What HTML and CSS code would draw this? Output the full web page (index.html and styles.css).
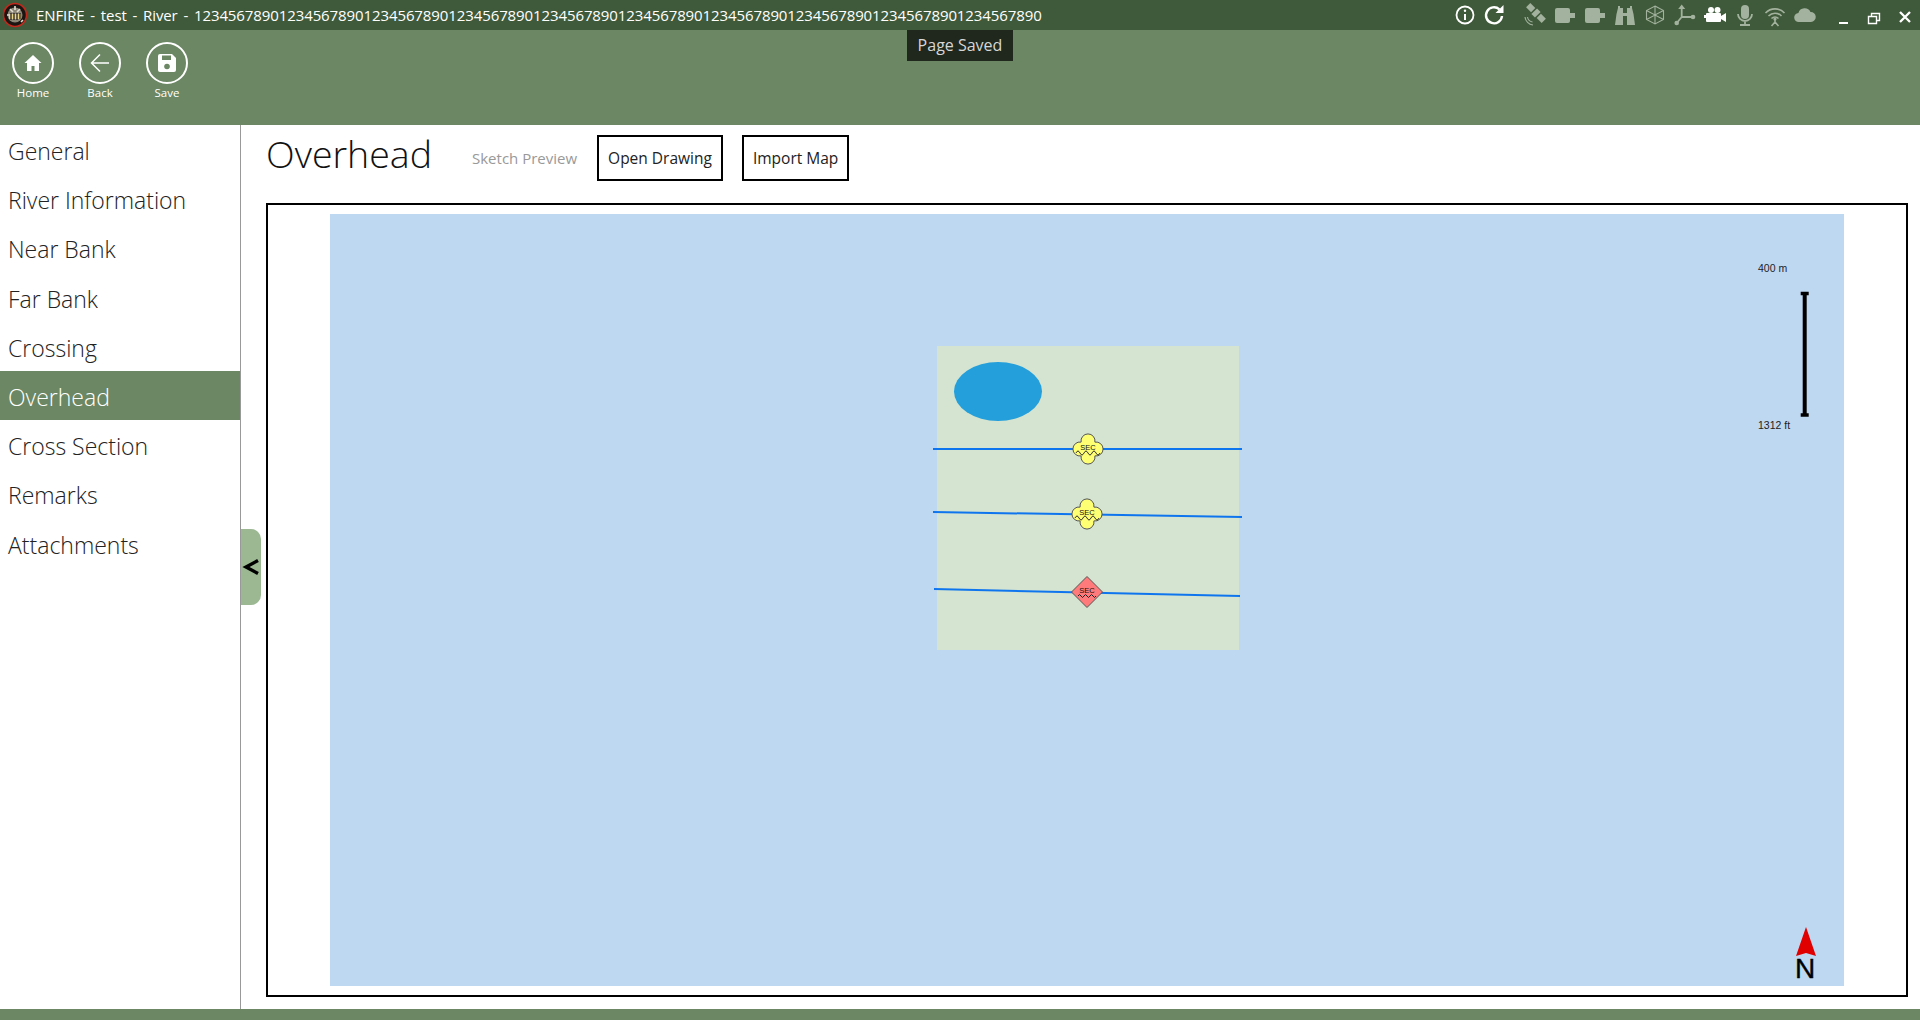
FILE: index.html
```html
<!DOCTYPE html>
<html lang="en">

<head>
    <meta charset="UTF-8" />
    <title>ENFIRE</title>
    <link rel="stylesheet" href="styles.css">
</head>

<body>
    <div class="titlebar">
        <svg class="logo" width="26" height="26" viewBox="0 0 26 26">
            <circle cx="13" cy="13" r="11.500" fill="#1c1512" stroke="#c4281c" stroke-width="1.500" />
            <circle cx="13" cy="13" r="7.500" fill="#8d8778" />
            <path d="M7 12h12v5H7z" fill="#e6d68e" />
            <path d="M9 11v7M12 11v7M15 11v7M18 11v6" stroke="#1c1512" stroke-width="1.200" />
            <path d="M8 7l3 3M18 7l-3 3M13 4v4M5 13h2M19 20l2-2" stroke="#e0dccf" stroke-width="1.600" />
        </svg>
        <span class="app-title">ENFIRE - test - River - 1234567890123456789012345678901234567890123456789012345678901234567890123456789012345678901234567890</span>

        <div class="status-icons">
            <svg class="ticon" viewBox="0 0 24 24"><circle cx="12" cy="12" r="8.500" fill="none" stroke="#fff" stroke-width="1.800" /><path d="M12 11v6" stroke="#fff" stroke-width="2" /><circle cx="12" cy="7.800" r="1.200" fill="#fff" /></svg>
            <svg class="ticon" viewBox="0 0 24 24"><path d="M19 13a8 8 0 1 1-2.600-6.600" fill="none" stroke="#fff" stroke-width="2.400" /><path d="M20.500 2v8h-8z" fill="#fff" /></svg>
            <svg class="ticon gap-left dim" viewBox="0 0 24 24"><g transform="rotate(45 13 10)"><rect x="2" y="7" width="7" height="6" /><rect x="10.500" y="6" width="5" height="8" /><rect x="17" y="7" width="7" height="6" /></g><path d="M2 14a9 9 0 0 0 8 8M4.500 14a6 6 0 0 0 5 5" fill="none" stroke="#a3b29e" stroke-width="1.100" /></svg>
            <svg class="ticon dim" viewBox="0 0 24 24"><rect x="2" y="5" width="15" height="15" rx="2" /><rect x="16" y="10" width="6" height="5" /></svg>
            <svg class="ticon dim" viewBox="0 0 24 24"><rect x="2" y="5" width="15" height="15" rx="2" /><rect x="16" y="10" width="6" height="5" /></svg>
            <svg class="ticon dim" viewBox="0 0 24 24"><path d="M5 3h2v2h3v5h4V5h3V3h2v2l1.500 6L22 22h-8V13h-4v9H2l1.500-11L5 5z" /></svg>
            <svg class="ticon" viewBox="0 0 24 24"><path d="M12 3l8.500 4.500v9L12 21l-8.500-4.500v-9zM3.500 7.500L12 12l8.500-4.500M12 12v9M12 3v9M3.500 16.500L12 12l8.500 4.500" fill="none" stroke="#a3b29e" stroke-width="1.100" /></svg>
            <svg class="ticon dim" viewBox="0 0 24 24"><path d="M8.700 3v11H20M8.700 14L3.700 20" fill="none" stroke="#a3b29e" stroke-width="1.800" /><path d="M8.700 1.500l-3.500 4.500h7z" /><circle cx="20" cy="14" r="2.300" /><circle cx="3.700" cy="20" r="2.300" /></svg>
            <svg class="ticon" viewBox="0 0 24 24"><circle cx="8" cy="7" r="3" fill="#fff" /><circle cx="14.500" cy="7" r="3" fill="#fff" /><rect x="3" y="10" width="15" height="9" rx="1" fill="#fff" /><path d="M18 13l5-3v9l-5-3zM1 12h2v3H1z" fill="#fff" /></svg>
            <svg class="ticon dim" viewBox="0 0 24 24"><rect x="8" y="2" width="8" height="14" rx="4" /><path d="M5 11a7 7 0 0 0 14 0M12 18v3" fill="none" stroke="#a3b29e" stroke-width="1.800" /><rect x="7" y="21" width="10" height="2" /></svg>
            <svg class="ticon" viewBox="0 0 24 24"><path d="M2.500 10a13 13 0 0 1 19 0M5.500 13a9 9 0 0 1 13 0M8.500 15.500a5 5 0 0 1 7 0M12 16v4M12 19l-3.500 4M12 19l3.500 4" fill="none" stroke="#a3b29e" stroke-width="1.600" /><circle cx="12" cy="16" r="1.600" fill="#a3b29e" /></svg>
            <svg class="ticon dim" viewBox="0 0 24 24"><path d="M6 19a4.500 4.500 0 0 1-.6-9A6.500 6.500 0 0 1 17.500 9a5 5 0 0 1 .5 10z" /></svg>
        </div>

        <div class="window-buttons">
            <svg width="14" height="24" viewBox="0 0 14 24"><rect x="2" y="19" width="9" height="2" fill="#fff" /></svg>
            <svg width="14" height="24" viewBox="0 0 14 24"><path d="M1.500 13.500h8v7h-8zM4.500 13v-2.500h8v7H10" fill="none" stroke="#fff" stroke-width="1.400" /></svg>
            <svg class="close-icon" width="14" height="24" viewBox="0 0 14 24"><path d="M2 9l10 10M12 9L2 19" stroke="#fff" stroke-width="2.300" /></svg>
        </div>
    </div>

    <div class="toolbar">
        <a class="tool">
            <span class="tool-circle">
                <svg width="22" height="22" viewBox="0 0 22 22"><path d="M11 3L2.500 11H5v8h4.500v-5h3v5H17v-8h2.500z" fill="#fff" /></svg>
            </span>
            Home
        </a>
        <a class="tool">
            <span class="tool-circle">
                <svg width="26" height="26" viewBox="0 0 26 26"><path d="M13 4.500L4.500 13l8.500 8.500M5 13h17" fill="none" stroke="#fff" stroke-width="1.500" /></svg>
            </span>
            Back
        </a>
        <a class="tool">
            <span class="tool-circle">
                <svg width="22" height="22" viewBox="0 0 22 22"><path d="M2 4a2 2 0 0 1 2-2h12l4 4v12a2 2 0 0 1-2 2H4a2 2 0 0 1-2-2z" fill="#fff" /><rect x="6" y="3.500" width="9" height="4.500" fill="#6b8763" /><circle cx="11" cy="14.500" r="2.800" fill="#6b8763" /></svg>
            </span>
            Save
        </a>
    </div>

    <div class="tooltip">Page Saved</div>

    <div class="main">
        <nav class="sidebar">
            <a class="nav-item">General</a>
            <a class="nav-item">River Information</a>
            <a class="nav-item">Near Bank</a>
            <a class="nav-item">Far Bank</a>
            <a class="nav-item">Crossing</a>
            <a class="nav-item active">Overhead</a>
            <a class="nav-item">Cross Section</a>
            <a class="nav-item">Remarks</a>
            <a class="nav-item">Attachments</a>
        </nav>

        <div class="collapse-handle">
            <svg width="18" height="18" viewBox="0 0 18 18"><path d="M16 2.500L4 9l12 6.500" fill="none" stroke="#000" stroke-width="3.400" /></svg>
        </div>

        <section class="content">
            <div class="content-head">
                <h1>Overhead</h1>
                <span class="preview-label">Sketch Preview</span>
                <button class="btn">Open Drawing</button>
                <button class="btn">Import Map</button>
            </div>

            <div class="sketch-frame">
                <svg class="sketch" width="1514" height="772" viewBox="330 214 1514 772">
                    <rect x="937" y="346" width="302" height="304" fill="#d4e4d0" />
                    <ellipse cx="998" cy="391.500" rx="44" ry="29.500" fill="#259fdb" />

                    <path d="M933 449H1242M933 512L1242 517M934 589L1240 596" stroke="#0f75ee" stroke-width="2" fill="none" />

                    <g transform="translate(1088 449)">
                        <path d="M-6.900-6.900A7 7 0 1 1 6.900-6.900 7 7 0 1 1 6.900 6.900 7 7 0 1 1-6.900 6.900 7 7 0 1 1-6.900-6.900Z" fill="#ffff73" stroke="#555" />
                        <text y="0.500" class="sec">SEC</text>
                        <path d="M-12 4q2-4 4 0t4 0 4 0 4 0 4 0 4 0" fill="none" stroke="#333" stroke-width="1" />
                    </g>
                    <g transform="translate(1087 514)">
                        <path d="M-6.900-6.900A7 7 0 1 1 6.900-6.900 7 7 0 1 1 6.900 6.900 7 7 0 1 1-6.900 6.900 7 7 0 1 1-6.900-6.900Z" fill="#ffff73" stroke="#555" />
                        <text y="0.500" class="sec">SEC</text>
                        <path d="M-12 4q2-4 4 0t4 0 4 0 4 0 4 0 4 0" fill="none" stroke="#333" stroke-width="1" />
                    </g>
                    <g transform="translate(1087 592)">
                        <path d="M0-15.500L15.500 0 0 15.500-15.500 0Z" fill="#ff7b7b" stroke="#555" />
                        <text y="1" class="sec">SEC</text>
                        <path d="M-9 4q1.500-3 3 0t3 0 3 0 3 0 3 0 3 0" fill="none" stroke="#222" stroke-width="1" />
                    </g>

                    <text x="1758" y="272" class="scale-text">400 m</text>
                    <text x="1758" y="429" class="scale-text">1312 ft</text>
                    <path d="M1804.700 293V416" stroke="#000" stroke-width="4" />
                    <path d="M1800.700 293.500H1808.700M1800.700 415H1808.700" stroke="#000" stroke-width="3.500" />

                    <path d="M1806 927L1816 956 1806 953 1796 956Z" fill="#e00000" />
                    <text x="1805" y="978" class="north">N</text>
                </svg>
            </div>
        </section>
    </div>

    <div class="statusbar"></div>
</body>

</html>
```

FILE: styles.css
```css
* {
    box-sizing: border-box;
}

html,
body {
    height: 100%;
}

body {
    margin: 0;
    display: flex;
    flex-direction: column;
    overflow: hidden;
    font-family: "Open Sans", "Liberation Sans", sans-serif;
    background-color: #fff;
    color: #222;
}

.titlebar {
    height: 30px;
    display: flex;
    align-items: center;
    padding-left: 2px;
    background-color: #3f5a3a;
    color: #fff;
}

.logo {
    flex: none;
}

.app-title {
    margin-left: 8px;
    font-size: 15px;
    letter-spacing: -0.1px;
    word-spacing: 2px;
    white-space: nowrap;
}

.status-icons {
    margin-left: auto;
    display: flex;
    gap: 6px;
}

.ticon {
    width: 24px;
    height: 24px;
    display: block;
}

.ticon.dim {
    fill: #a3b29e;
}

.gap-left {
    margin-left: 10px;
}

.window-buttons {
    display: flex;
    gap: 16px;
    margin-left: 20px;
    margin-right: 8px;
}

.close-icon {
    margin-left: 1px;
}

.toolbar {
    height: 95px;
    display: flex;
    gap: 23px;
    padding: 12px 0 0 11px;
    background-color: #6b8763;
}

.tool {
    width: 44px;
    display: flex;
    flex-direction: column;
    align-items: center;
    gap: 1px;
    color: #fff;
    font-size: 11.5px;
}

.tool-circle {
    width: 42px;
    height: 42px;
    display: flex;
    align-items: center;
    justify-content: center;
    border: 2.5px solid #fff;
    border-radius: 50%;
}

.tooltip {
    position: absolute;
    top: 30px;
    left: 907px;
    width: 106px;
    height: 31px;
    display: flex;
    align-items: center;
    justify-content: center;
    padding-bottom: 2px;
    background-color: #20281e;
    color: #d6d6d6;
    font-size: 16px;
}

.main {
    flex: 1;
    display: flex;
    position: relative;
    min-height: 0;
}

.sidebar {
    width: 241px;
    flex: none;
    border-right: 1px solid #999;
}

.nav-item {
    height: 49.2px;
    display: flex;
    align-items: center;
    padding: 3px 0 0 8px;
    font-size: 23px;
    font-weight: 300;
    color: #222;
}

.nav-item.active {
    background-color: #6b8763;
    color: #fff;
}

.collapse-handle {
    position: absolute;
    top: 404px;
    left: 241px;
    width: 20px;
    height: 76px;
    display: flex;
    align-items: center;
    justify-content: center;
    background-color: #9bb892;
    border-radius: 0 10px 10px 0;
}

.content {
    flex: 1;
    min-width: 0;
    display: flex;
    flex-direction: column;
    padding: 0 12px 12px 25px;
}

.content-head {
    height: 78px;
    display: flex;
    align-items: center;
    padding: 10px 0 22px;
}

h1 {
    margin: 0 40px 10px 0;
    font-size: 37.5px;
    font-weight: 300;
    color: #111;
}

.preview-label {
    margin-right: 20px;
    font-size: 15px;
    color: #999;
}

.btn {
    height: 46px;
    margin-right: 19px;
    padding: 0 9px;
    border: 2px solid #000;
    background-color: #fff;
    font-family: inherit;
    font-size: 15.5px;
    color: #222;
}

.sketch-frame {
    flex: 1;
    display: flex;
    justify-content: center;
    align-items: center;
    border: 2.5px solid #000;
}

.sketch {
    display: block;
    background-color: #bfd8f1;
}

.sec {
    font-family: "Liberation Sans", sans-serif;
    font-size: 7.5px;
    text-anchor: middle;
    fill: #111;
}

.scale-text {
    font-family: "Liberation Sans", sans-serif;
    font-size: 10.5px;
    fill: #222;
}

.north {
    font-family: "Liberation Sans", sans-serif;
    font-size: 28px;
    text-anchor: middle;
    fill: #000;
    stroke: #000;
    stroke-width: 0.4px;
}

.statusbar {
    height: 11px;
    flex: none;
    background-color: #6b8763;
}
```
